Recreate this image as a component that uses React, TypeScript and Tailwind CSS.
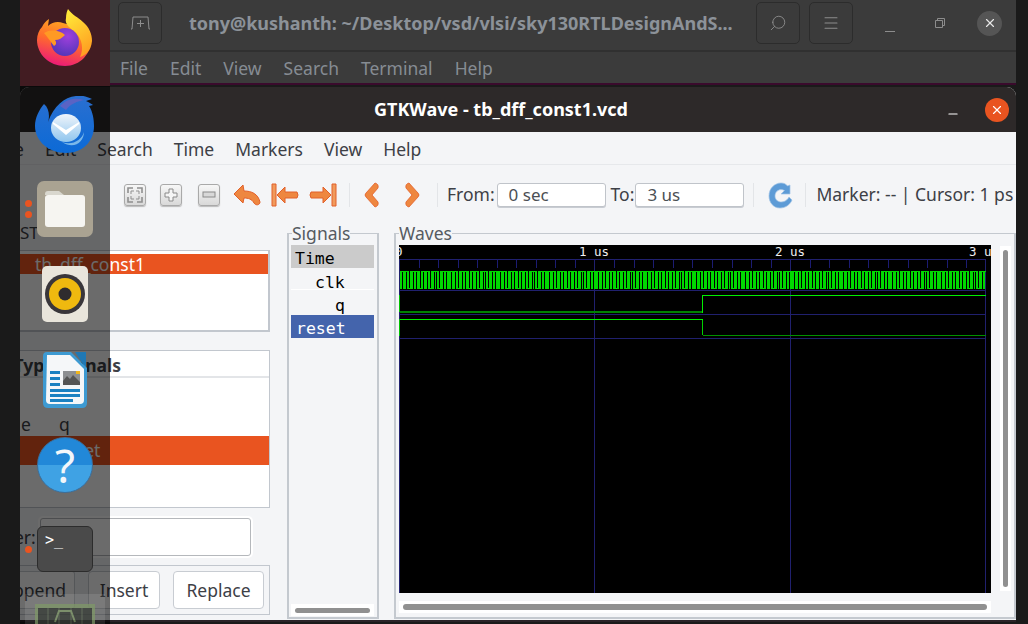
import React from 'react';
import { Search, Menu, X, Minus } from 'lucide-react';

const CANVAS_W = 592;
const GRID_W = 587;
const US = 195.6;

// clk is aliased at this zoom, so the columns just repeat a hand read pattern
const CLK_PATTERN = 'GGTGGGTGGBGGGTGGTGGGBGGTGGGTGGBGGGTGTGGBGGGTGGTGG';

function FirefoxIcon() {
  return (
    <svg width="58" height="58" viewBox="0 0 58 58">
      <defs>
        <linearGradient id="ffBody" x1="0.7" y1="0" x2="0.4" y2="1">
          <stop offset="0" stopColor="#ffb21f" />
          <stop offset="0.5" stopColor="#ff6b2c" />
          <stop offset="1" stopColor="#ec1a78" />
        </linearGradient>
        <linearGradient id="ffTail" x1="0.3" y1="0" x2="0.7" y2="1">
          <stop offset="0" stopColor="#ffe838" />
          <stop offset="1" stopColor="#ff9b20" />
        </linearGradient>
        <radialGradient id="ffBall" cx="0.6" cy="0.3" r="0.8">
          <stop offset="0" stopColor="#a03fdc" />
          <stop offset="1" stopColor="#4a35b5" />
        </radialGradient>
      </defs>
      <path d="M6 18 C8 14 10 12 13 10 L12 17 C16 13 22 12 27 14 C36 16 50 22 55 28 C56 45 44 57 29 57 C13 57 1 45 1 31 C1 26 3 21 6 18Z" fill="url(#ffBody)" />
      <path d="M32 0 C36 6 42 8 47 13 C53 18 56 25 56 32 C55 42 50 46 44 48 C48 40 46 30 40 24 C36 20 28 16 30 9 C30 5 31 2 32 0Z" fill="url(#ffTail)" />
      <circle cx="29" cy="33" r="14" fill="url(#ffBall)" />
      <path d="M8 24 C14 20 24 21 29 26 C26 29 23 31 19 31 C21 34 20 36 18 37 C15 33 13 30 8 24Z" fill="#ff9a24" />
    </svg>
  );
}

function ThunderbirdIcon() {
  return (
    <svg width="62" height="58" viewBox="0 0 62 58">
      <defs>
        <linearGradient id="tbBody" x1="0.5" y1="0" x2="0.5" y2="1">
          <stop offset="0" stopColor="#2a6fd0" />
          <stop offset="1" stopColor="#0c6ad6" />
        </linearGradient>
        <linearGradient id="tbEnv" x1="0.5" y1="0" x2="0.5" y2="1">
          <stop offset="0" stopColor="#f0f5fb" />
          <stop offset="1" stopColor="#8fc5ee" />
        </linearGradient>
      </defs>
      <path d="M10 8 C15 12 16 20 14 26 C20 10 30 1 42 0 C46 -1 52 0 58 3 L52 5 C55 6 57 8 59 9 L55 10 C59 16 60 24 60 30 C60 46 48 57 32 57 C16 57 1 46 1 30 C1 22 5 14 10 8Z" fill="url(#tbBody)" />
      <path d="M26 10 C32 3 42 1 50 4 C44 5 36 8 32 14Z" fill="#5a63c4" />
      <ellipse cx="32" cy="32" rx="15" ry="14" fill="url(#tbEnv)" />
      <path d="M19 26 L32 34 L45 26 L45 28 L32 39 L19 28Z" fill="#ffffff" />
      <path d="M28 46 C38 50 48 44 50 36 C50 46 40 54 28 46Z" fill="#7ab8ea" />
    </svg>
  );
}

function FilesIcon() {
  return (
    <div className="flex h-[56px] w-[56px] items-center justify-center rounded-[7px] bg-[#aaa392]">
      <svg width="42" height="38" viewBox="0 0 42 38">
        <path d="M1 4 Q1 1 4 1 H15 L20 5 H1Z" fill="#d9d7ce" />
        <rect x="1" y="5" width="40" height="32" rx="3" fill="#f6f5f1" />
      </svg>
    </div>
  );
}

function RhythmboxIcon() {
  return (
    <div className="flex h-[56px] w-[46px] items-center justify-center rounded-[5px] bg-[#e9e5db]">
      <svg width="42" height="42" viewBox="0 0 42 42">
        <circle cx="21" cy="21" r="20" fill="#39363a" />
        <circle cx="21" cy="21" r="16" fill="#efb90f" />
        <circle cx="21" cy="21" r="6.5" fill="#2f2c2e" />
      </svg>
    </div>
  );
}

function WriterIcon() {
  return (
    <svg width="46" height="58" viewBox="0 0 46 58">
      <path d="M33 1 H44 V18Z" fill="#1f78b4" />
      <path d="M5 1 H29 L45 17 V52 Q45 57 40 57 H6 Q1 57 1 52 V5 Q1 1 5 1Z" fill="#3d9ad2" />
      <path d="M5 4 H28 L42 18 V49 Q42 53 38 53 H8 Q4 53 4 49Z" fill="#f5f7f9" />
      <path d="M8 20 H18 V23 H8Z M8 26 H18 V29 H8Z M8 32 H18 V35 H8Z M8 38 H38 V41 H8Z M8 43 H38 V46 H8Z M8 48 H31 V51 H8Z" fill="#1b81c1" />
      <rect x="21" y="20" width="17" height="14" fill="#8d8f92" />
      <path d="M21 30 L25 25 L28 28 L31 24 L38 31 V34 H21Z" fill="#555" />
      <rect x="34" y="20" width="4" height="3" fill="#f0b61d" />
    </svg>
  );
}

function HelpIcon() {
  return (
    <div className="flex h-[56px] w-[56px] items-center justify-center rounded-full border border-[#3b6f9c] bg-[linear-gradient(180deg,#2288d8_0%,#2288d8_50%,#3fa2e4_50%,#3fa2e4_100%)] font-['Noto_Sans'] text-[46px] leading-none text-[#f2f6fa]">
      ?
    </div>
  );
}

function TerminalIcon() {
  return (
    <div className="h-[46px] w-[56px] rounded-[6px] border border-[#2c2c2c] bg-[#4a4a4a] pl-[7px] pt-[2px] font-['DejaVu_Sans_Mono'] text-[15px] leading-[22px] text-white">
      &gt;_
    </div>
  );
}

function DimAppIcon() {
  return (
    <svg width="60" height="20" viewBox="0 0 60 20">
      <rect width="60" height="20" fill="#7f9a67" />
      <rect x="3" y="4" width="54" height="16" fill="#30352f" />
      <path d="M13 4 V20 M24 4 V20 M36 4 V20 M47 4 V20" stroke="#5c6a52" strokeWidth="1" />
      <path d="M20 18 L24 7 H36 L40 18" fill="none" stroke="#7f9a67" strokeWidth="2" />
    </svg>
  );
}

function ZoomButton({ children }: { children: React.ReactNode }) {
  return (
    <div className="flex h-[22px] w-[22px] items-center justify-center rounded-[3px] border border-[#a9a9a9] bg-[linear-gradient(180deg,#f7f7f7,#d9d9d9)] shadow-[0_1px_1px_#bbb]">
      {children}
    </div>
  );
}

function ToolbarIcons() {
  return (
    <div className="flex items-center">
      <ZoomButton>
        <svg width="16" height="16" viewBox="0 0 16 16" fill="none" stroke="#8f8f8f" strokeWidth="1.6">
          <path d="M1 6 V1 H6 M10 1 H15 V6 M15 10 V15 H10 M6 15 H1 V10" />
          <path d="M4 7 V4 H7 M9 4 H12 V7 M12 9 V12 H9 M7 12 H4 V9" strokeWidth="1" />
        </svg>
      </ZoomButton>
      <div className="ml-[14px]">
        <ZoomButton>
          <svg width="14" height="14" viewBox="0 0 14 14">
            <path d="M5 1 H9 V5 H13 V9 H9 V13 H5 V9 H1 V5 H5Z" fill="#f5f5f5" stroke="#8a8a8a" />
          </svg>
        </ZoomButton>
      </div>
      <div className="ml-[16px]">
        <ZoomButton>
          <svg width="14" height="8" viewBox="0 0 14 8">
            <rect x="1" y="1" width="12" height="5" fill="#d8d8d8" stroke="#8a8a8a" />
          </svg>
        </ZoomButton>
      </div>
      <svg className="ml-[13px]" width="28" height="24" viewBox="0 0 28 24">
        <path d="M1 11 L10 2 L11 8 C19 8 25 11 27 19 C27 22 23 23 21 20 C19 16 15 15 11 15 L10 20Z" fill="#ee8740" stroke="#e2602a" strokeWidth="1" />
      </svg>
      <svg className="ml-[10px]" width="28" height="24" viewBox="0 0 28 24">
        <path d="M1 1 H5 V23 H1Z" fill="#f09a5c" stroke="#e2602a" />
        <path d="M6 12 L14 4 V9 H26 Q28 12 26 15 H14 V20Z" fill="#ee8740" stroke="#e2602a" />
      </svg>
      <svg className="ml-[10px]" width="28" height="24" viewBox="0 0 28 24">
        <path d="M27 1 H23 V23 H27Z" fill="#f09a5c" stroke="#e2602a" />
        <path d="M22 12 L14 4 V9 H2 Q0 12 2 15 H14 V20Z" fill="#ee8740" stroke="#e2602a" />
      </svg>
      <div className="ml-[12px] h-[24px] w-px bg-[#e3e5e8]" />
      <svg className="ml-[14px]" width="16" height="26" viewBox="0 0 16 26">
        <path d="M11 1 L2 11 Q0 13 2 15 L11 25 Q15 24 14 20 L8 13 L14 6 Q15 2 11 1Z" fill="#ee8740" stroke="#e2602a" strokeWidth="0.8" />
      </svg>
      <svg className="ml-[24px]" width="16" height="26" viewBox="0 0 16 26">
        <path d="M5 1 L14 11 Q16 13 14 15 L5 25 Q1 24 2 20 L8 13 L2 6 Q1 2 5 1Z" fill="#ee8740" stroke="#e2602a" strokeWidth="0.8" />
      </svg>
      <div className="ml-[17px] h-[24px] w-px bg-[#e3e5e8]" />
    </div>
  );
}

function RangeInput({ value }: { value: string }) {
  return (
    <div className="flex h-[24px] w-[109px] items-center rounded-[3px] border border-[#c0c4ca] bg-white pl-[11px] text-[17px] text-[#4b4f54] shadow-[0_1px_0_#c8ccd2]">
      {value}
    </div>
  );
}

function WaveCanvas() {
  const ticks: number[] = [];
  for (let i = 1; i < 30; i++) {
    if (i % 10 !== 0) ticks.push(Math.round((i * US) / 10));
  }
  const clkCols = Array.from({ length: GRID_W - 1 }, (_, x) => CLK_PATTERN[x % CLK_PATTERN.length]);

  return (
    <svg className="block shrink-0 bg-black" width={CANVAS_W} height="348" viewBox="0 0 592 348" shapeRendering="crispEdges">
      <path d="M0 14.5 H587" stroke="#20206e" />
      {ticks.map((x) => (
        <path key={x} d={`M${x + 0.5} 14 V23`} stroke="#1c1c72" />
      ))}
      {/* major grid */}
      <path d="M0.5 14 V348 M195.5 14 V348 M391.5 14 V348 M586.5 14 V348" stroke="#20206e" />
      {/* row separators */}
      <path d="M0 45.5 H587 M0 69.5 H587 M0 93.5 H587" stroke="#20206e" />
      {clkCols.map((c, x) => (
        <rect
          key={x}
          x={x + 1}
          y={c === 'B' ? 43 : 26}
          width="1"
          height={c === 'G' ? 18 : 1}
          fill="#00d800"
        />
      ))}
      {/* q */}
      <path d="M0.5 50 V67" stroke="#00c000" />
      <path d="M1 67 H303" stroke="#008200" strokeWidth="2" />
      <path d="M303.5 68 V50.5 H587" fill="none" stroke="#00f000" />
      {/* reset */}
      <path d="M0.5 74 V91" stroke="#00c000" />
      <path d="M1 74.5 H303.5" stroke="#00f000" />
      <path d="M303.5 74.5 V90" stroke="#00d000" />
      <path d="M304 90.5 H587" stroke="#009000" />
      <g fill="#f0f0f0" fontFamily="'DejaVu Sans Mono', monospace" fontSize="12.5" shapeRendering="auto">
        <text x="-4" y="11">0</text>
        <text x="180" y="11">1 us</text>
        <text x="376" y="11">2 us</text>
        <text x="570" y="11">3 us</text>
      </g>
    </svg>
  );
}

export default function App() {
  return (
    <div className="relative h-[624px] w-[1028px] overflow-hidden bg-[#1a1a1a] pl-[20px] font-['Noto_Sans',sans-serif]">
      {/* terminal window behind */}
      <div className="h-[85px] w-[996px] border-b-2 border-[#3a0a2c] bg-[#3b3b3b]">
        <div className="flex h-[52px] items-center border-b-2 border-[#303030] pb-[4px] pl-[98px]">
          <div className="flex h-[42px] w-[44px] items-center justify-center rounded-[5px] border border-[#2c2c2c]">
            <svg width="20" height="16" viewBox="0 0 20 16" fill="none" stroke="#8d8d8d" strokeWidth="1">
              <path d="M1 14 H2 L3 2 H18 L19 14 H20" />
              <path d="M10.5 5 V12 M7 8.5 H14" />
            </svg>
          </div>
          <div className="ml-[27px] w-[540px] whitespace-nowrap text-[18px] font-bold text-[#8c9299]">
            tony@kushanth: ~/Desktop/vsd/vlsi/sky130RTLDesignAndS...
          </div>
          <div className="ml-[27px] flex h-[42px] w-[44px] items-center justify-center rounded-[5px] border border-[#2c2c2c] text-[#8d8d8d]">
            <Search size={18} strokeWidth={1.2} className="scale-x-[-1]" />
          </div>
          <div className="ml-[9px] flex h-[42px] w-[44px] items-center justify-center rounded-[5px] border border-[#2c2c2c] text-[#8d8d8d]">
            <Menu size={18} strokeWidth={1.4} />
          </div>
          <div className="ml-[32px] h-px w-[10px] translate-y-[8px] bg-[#8d8d8d]" />
          <svg className="ml-[40px]" width="10" height="10" viewBox="0 0 10 10" fill="none" stroke="#8d8d8d">
            <path d="M0.5 2.5 H7.5 V9.5 H0.5Z M2.5 2.5 V0.5 H9.5 V7.5 H7.5" />
          </svg>
          <div className="ml-[32px] flex h-[25px] w-[25px] items-center justify-center rounded-full bg-[#555555] text-[#e8e8e8]">
            <X size={14} strokeWidth={2} />
          </div>
        </div>
        <div className="flex h-[31px] items-center gap-[22px] pl-[100px] pt-[2px] text-[17.5px] text-[#868c93]">
          <span>File</span>
          <span>Edit</span>
          <span>View</span>
          <span>Search</span>
          <span>Terminal</span>
          <span>Help</span>
        </div>
      </div>

      {/* GTKWave window */}
      <div className="mt-[2px] h-[535px] w-[996px] overflow-hidden rounded-t-[9px] border-b-2 border-[#2a2328] bg-[#f4f5f7]">
        <div className="relative flex h-[45px] items-center justify-center bg-[#2d2929] text-[18px] font-bold text-white">
          <span className="mr-[34px]">GTKWave - tb_dff_const1.vcd</span>
          <Minus size={14} strokeWidth={2} className="absolute right-[56px] top-[20px] text-white" />
          <div className="absolute right-[7px] top-[11px] flex h-[24px] w-[24px] items-center justify-center rounded-full bg-[#e95420] text-white">
            <X size={14} strokeWidth={2} />
          </div>
        </div>

        <div className="flex h-[33px] items-center overflow-hidden border-b border-[#e6e8eb] pt-[3px] text-[17.5px] text-[#3d4046]">
          <div className="-ml-[24px] flex shrink-0 items-center gap-[21px]">
            <span>File</span>
            <span>Edit</span>
            <span>Search</span>
            <span>Time</span>
            <span>Markers</span>
            <span>View</span>
            <span>Help</span>
          </div>
        </div>

        <div className="flex h-[59px] items-center pl-[104px] text-[17.5px] text-[#3d4046]">
          <ToolbarIcons />
          <span className="ml-[9px]">From:</span>
          <div className="ml-[2px]">
            <RangeInput value="0 sec" />
          </div>
          <span className="ml-[5px]">To:</span>
          <div className="ml-px">
            <RangeInput value="3 us" />
          </div>
          <div className="ml-[9px] h-[24px] w-px bg-[#e3e5e8]" />
          <svg className="ml-[14px]" width="25" height="28" viewBox="0 0 25 28">
            <path d="M22 4 V13 H13 L16.5 9.5 C12 7 7 10 7 15 C7 20 12 22 16 20.5 C18 20 20 18 21 16 L24 19 C22 24 17 27 12 27 C5 27 1 21 1 15 C1 7 7 2 13 2 C16 2 18 3 19.5 5Z" fill="#5d9bd6" stroke="#9fc3e6" strokeWidth="0.7" />
          </svg>
          <div className="ml-[12px] h-[24px] w-px bg-[#e3e5e8]" />
          <span className="ml-[10px] whitespace-nowrap">Marker: -- | Cursor: 1 ps</span>
        </div>

        <div className="flex items-start">
          {/* SST and signal pickers, mostly under the dock */}
          <div className="flex w-[250px] flex-col text-[17.5px] text-[#3d4046]">
            <div className="h-[26px] text-[17px] leading-[18px]">ST</div>
            <div className="h-[82px] border-2 border-l-0 border-t-[1px] border-[#c2c7ce] bg-white pt-[3px]">
              <div className="flex h-[20px] items-center bg-[#e95420] pl-[15px] text-white">
                th_dff_const1
              </div>
            </div>
            <div className="mt-[18px] flex h-[158px] flex-col border border-l-0 border-[#c2c7ce] bg-white">
              <div className="h-[27px] shrink-0 border-b-2 border-[#e3e5e8]">
                <div className="flex w-[101px] justify-end whitespace-nowrap font-bold leading-[28px]">
                  <span className="shrink-0">Type Signals</span>
                </div>
              </div>
              <div className="flex h-[57px] items-end gap-[28px] pb-[1px] pl-[1px] leading-[20px]">
                <span>e</span>
                <span>q</span>
              </div>
              <div className="mt-[1px] flex h-[29px] items-center bg-[#e95420] pl-[39px] text-white">
                reset
              </div>
            </div>
            <div className="mt-[10px] flex h-[38px] items-center">
              <span className="-ml-[6px] w-[26px] shrink-0">er:</span>
              <div className="h-[38px] w-[211px] rounded-[3px] border border-[#b5b8bc] bg-white shadow-[0_0_0_2px_#ffffff]" />
            </div>
            <div className="mt-[9px] flex h-[50px] items-center border border-l-0 border-[#c2c7ce]">
              <div className="flex h-[38px] w-[55px] items-center justify-end rounded-r-[3px] border border-l-0 border-[#c8ccd2] bg-white pr-[8px]">
                ppend
              </div>
              <div className="ml-[13px] flex h-[38px] w-[72px] items-center justify-center rounded-[4px] border border-[#c8ccd2] bg-white">
                Insert
              </div>
              <div className="ml-[13px] flex h-[38px] w-[91px] items-center justify-center rounded-[4px] border border-[#c8ccd2] bg-white">
                Replace
              </div>
            </div>
          </div>

          <fieldset className="-mt-[2px] ml-[17px] h-[397px] w-[92px] border-2 border-t-[1px] border-[#c4c9cf] pl-[2px] pr-[3px]">
            <legend className="ml-px text-[17.5px] leading-[23px] text-[#565b61]">Signals</legend>
            <div className="flex h-[371px] flex-col font-['DejaVu_Sans_Mono',monospace] text-[16.5px] leading-[27px] text-black">
              <div className="h-[23px] bg-[#cbcbcb] pl-[4px]">Time</div>
              <div className="mt-[1px] h-[21px] border-b border-white pl-[24px]">clk</div>
              <div className="mt-[2px] h-[22px] pl-[44px]">q</div>
              <div className="mt-px h-[23px] bg-[#4464ac] pl-[5px] text-white">reset</div>
              <div className="mt-auto flex h-[12px] items-center bg-white px-[4px]">
                <div className="h-[5px] w-full rounded-full bg-[#909090]" />
              </div>
            </div>
          </fieldset>

          <fieldset className="-mt-[2px] ml-[15px] h-[397px] w-[622px] border-2 border-t-[1px] border-[#c4c9cf] pl-[3px]">
            <legend className="text-[17.5px] leading-[23px] text-[#565b61]">Waves</legend>
            <div className="flex">
              <WaveCanvas />
              <div className="ml-[9px] mt-px flex h-[345px] w-[11px] justify-center bg-white py-[4px]">
                <div className="h-full w-[5px] rounded-full bg-[#909090]" />
              </div>
            </div>
            <div className="mt-[8px] flex h-[12px] w-[592px] items-center bg-white pl-[4px] pr-[4px]">
              <div className="h-[6px] w-full rounded-full bg-[#909090]" />
            </div>
          </fieldset>
        </div>
      </div>

      {/* dock lies over the windows */}
      <div className="absolute bottom-0 left-[20px] top-0 flex w-[90px] flex-col items-center bg-black/58">
        <div className="flex h-[86px] w-full shrink-0 justify-center bg-[#421c22] pt-[9px]">
          <FirefoxIcon />
        </div>
        <div className="mt-[10px] shrink-0">
          <ThunderbirdIcon />
        </div>
        <div className="mt-[27px] shrink-0">
          <FilesIcon />
        </div>
        <div className="mt-[29px] shrink-0">
          <RhythmboxIcon />
        </div>
        <div className="mt-[29px] shrink-0">
          <WriterIcon />
        </div>
        <div className="mt-[28px] shrink-0">
          <HelpIcon />
        </div>
        <div className="mt-[33px] shrink-0">
          <TerminalIcon />
        </div>
        <div className="mt-[22px] flex w-[80px] shrink-0 justify-center bg-white/10 pt-[10px]">
          <div className="opacity-70">
            <DimAppIcon />
          </div>
        </div>
        {/* running app dots */}
        <span className="absolute left-[5px] top-[200px] h-[7px] w-[7px] rounded-full bg-[#e95420]" />
        <span className="absolute left-[5px] top-[211px] h-[7px] w-[7px] rounded-full bg-[#e95420]" />
        <span className="absolute left-[5px] top-[546px] h-[7px] w-[7px] rounded-full bg-[#e95420]" />
      </div>
    </div>
  );
}
